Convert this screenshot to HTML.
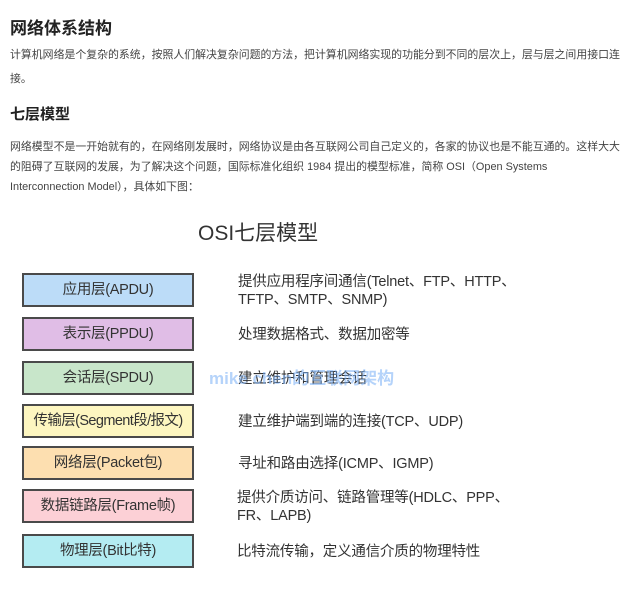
<!DOCTYPE html>
<html><head><meta charset="utf-8"><style>
body{margin:0;width:640px;height:591px;background:#fff;font-family:"Liberation Sans","Noto Sans CJK SC",sans-serif;color:#333;position:relative;overflow:hidden}
.a{position:absolute;white-space:nowrap}
h1{position:absolute;left:10px;top:14px;margin:0;font-size:17px;font-weight:bold;color:#222}
h2{position:absolute;left:10px;top:103px;margin:0;font-size:15px;font-weight:bold;color:#222}
.p{position:absolute;left:10px;font-size:10.9px;color:#444;line-height:20px;white-space:nowrap}
.box{position:absolute;left:22px;width:168px;height:30px;border:2px solid #4a4a4a;text-align:center;line-height:30px;font-size:14.5px;letter-spacing:-0.3px;color:#333}
.d{position:absolute;left:238px;font-size:14.5px;letter-spacing:-0.2px;color:#333;line-height:18px;white-space:nowrap}
</style></head><body>
<h1>网络体系结构</h1>
<div class="p" style="top:43px;line-height:24px">计算机网络是个复杂的系统，按照人们解决复杂问题的方法，把计算机网络实现的功能分到不同的层次上，层与层之间用接口连<br>接。</div>
<h2>七层模型</h2>
<div class="p" style="top:137px">网络模型不是一开始就有的，在网络刚发展时，网络协议是由各互联网公司自己定义的，各家的协议也是不能互通的。这样大大<br>的阻碍了互联网的发展，为了解决这个问题，国际标准化组织 1984 提出的模型标准，简称 OSI（Open Systems<br>Interconnection Model），具体如下图：</div>
<div class="a" style="left:198px;top:217px;font-size:21px;color:#333">OSI七层模型</div>
<div class="box" style="top:273px;background:#bcdcf8">应用层(APDU)</div>
<div class="box" style="top:317px;background:#e0bde6">表示层(PPDU)</div>
<div class="box" style="top:361px;background:#c8e6ca">会话层(SPDU)</div>
<div class="box" style="top:404px;background:#fdf6c0;letter-spacing:-0.6px">传输层(Segment段/报文)</div>
<div class="box" style="top:446px;background:#fddfb0">网络层(Packet包)</div>
<div class="box" style="top:489px;background:#fcd0d6">数据链路层(Frame帧)</div>
<div class="box" style="top:534px;background:#b4ecf2">物理层(Bit比特)</div>
<div class="d" style="top:273px">提供应用程序间通信(Telnet、FTP、HTTP、<br>TFTP、SMTP、SNMP)</div>
<div class="d" style="top:326px">处理数据格式、数据加密等</div>
<div class="d" style="top:370px">建立维护和管理会话</div>
<div class="a" style="left:209px;top:364px;font-size:17px;font-weight:bold;color:rgba(120,175,245,0.55)">mike chen的互联网架构</div>
<div class="d" style="top:413px">建立维护端到端的连接(TCP、UDP)</div>
<div class="d" style="top:455px">寻址和路由选择(ICMP、IGMP)</div>
<div class="d" style="top:489px;left:237px">提供介质访问、链路管理等(HDLC、PPP、<br>FR、LAPB)</div>
<div class="d" style="top:543px;left:237px">比特流传输，定义通信介质的物理特性</div>
</body></html>
